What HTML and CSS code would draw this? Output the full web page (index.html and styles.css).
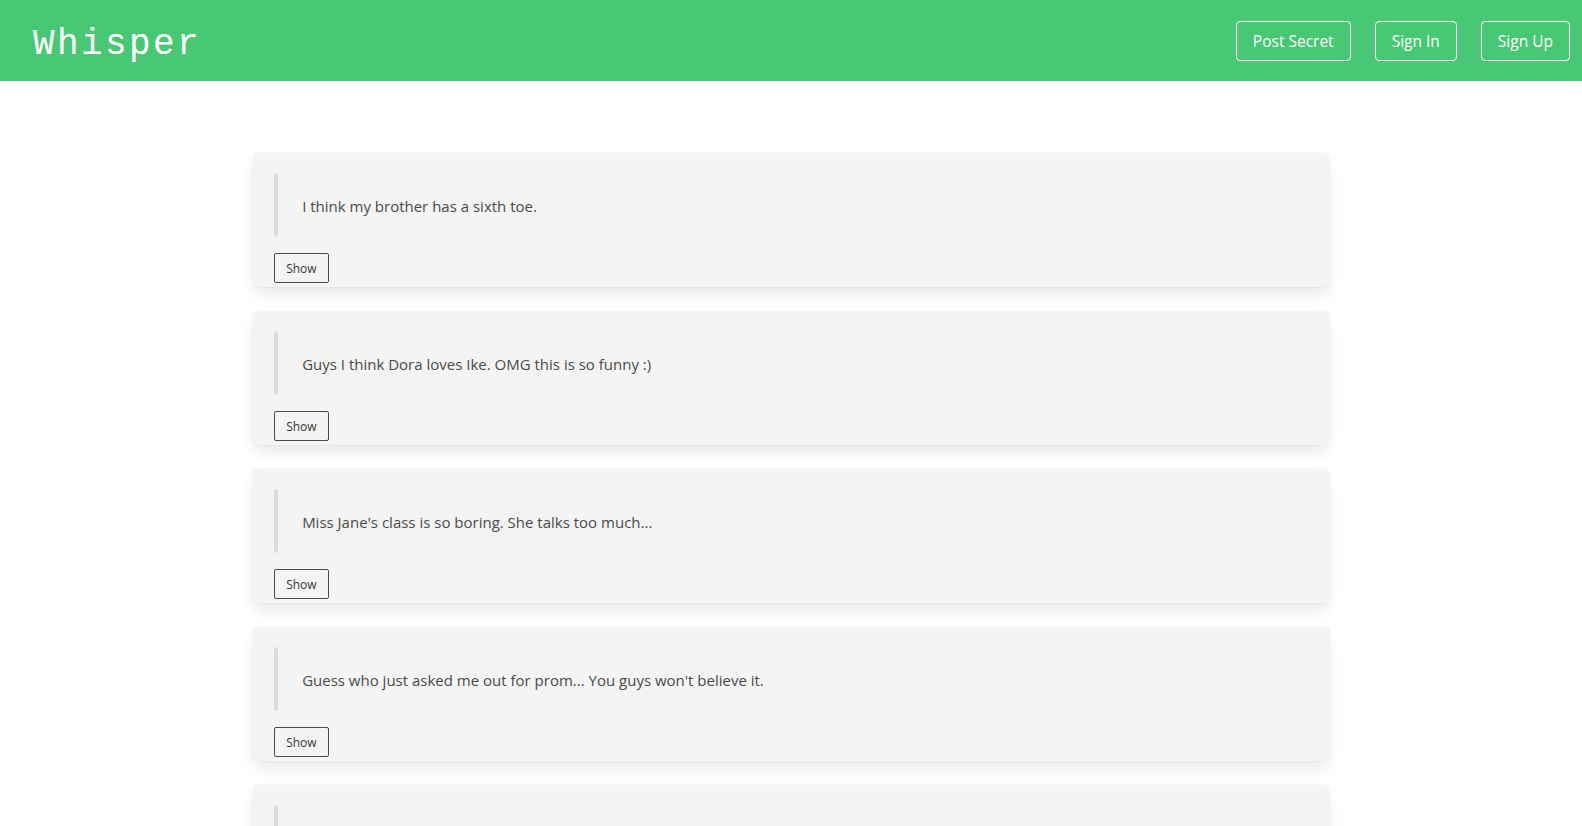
FILE: index.html
```html
<!DOCTYPE html>
<html lang="en">
<head>
<meta charset="utf-8">
<title>Whisper</title>
<link rel="stylesheet" href="styles.css">
</head>
<body>
<header class="navbar">
  <div class="brand">Whisper</div>
  <nav class="nav-buttons">
    <a class="nav-btn" href="#">Post Secret</a>
    <a class="nav-btn" href="#">Sign In</a>
    <a class="nav-btn" href="#">Sign Up</a>
  </nav>
</header>
<main class="feed">
  <article class="card">
    <blockquote class="secret">I think my brother has a sixth toe.</blockquote>
    <button class="show-btn">Show</button>
  </article>
  <article class="card">
    <blockquote class="secret">Guys I think Dora loves Ike. OMG this is so funny :)</blockquote>
    <button class="show-btn">Show</button>
  </article>
  <article class="card">
    <blockquote class="secret">Miss Jane's class is so boring. She talks too much...</blockquote>
    <button class="show-btn">Show</button>
  </article>
  <article class="card">
    <blockquote class="secret">Guess who just asked me out for prom... You guys won't believe it.</blockquote>
    <button class="show-btn">Show</button>
  </article>
  <article class="card">
    <blockquote class="secret">I secretly ate the last slice of cake.</blockquote>
    <button class="show-btn">Show</button>
  </article>
</main>
</body>
</html>
```
FILE: styles.css
```css
* { box-sizing: border-box; }

body {
  margin: 0;
  font-family: "Open Sans", "Noto Sans", sans-serif;
  color: #4a4a4a;
  background: #ffffff;
}

.navbar {
  height: 81px;
  background: #48c774;
  display: flex;
  align-items: center;
  justify-content: space-between;
  padding: 0 12px 0 33px;
}

.brand {
  font-family: "Liberation Mono", monospace;
  font-size: 36px;
  letter-spacing: 2.4px;
  color: #ffffff;
  line-height: 1;
  padding-top: 9px;
}

.nav-buttons {
  display: flex;
  gap: 24px;
}

.nav-btn {
  display: flex;
  align-items: center;
  height: 40px;
  padding: 0 16px;
  border: 1px solid #ffffff;
  border-radius: 4px;
  color: #ffffff;
  text-decoration: none;
  font-size: 15.5px;
}

.feed {
  padding-top: 72px;
}

.card {
  width: 68%;
  margin: 0 auto 24px;
  background: #f4f4f4;
  border-radius: 4px;
  padding: 20px 21px 4px;
  box-shadow: 0 8px 16px -2px rgba(10, 10, 10, 0.1), 0 0 0 1px rgba(10, 10, 10, 0.02);
}

.secret {
  margin: 0 0 16px;
  padding: 21px 24px 19px;
  border-left: 4px solid #dbdbdb;
  border-radius: 4px;
  font-size: 15px;
  line-height: 24px;
}

.show-btn {
  display: block;
  height: 30px;
  padding: 0 11px;
  background: transparent;
  border: 1px solid #4a4a4a;
  border-radius: 2px;
  font-family: inherit;
  font-size: 12px;
  color: #363636;
}
```
